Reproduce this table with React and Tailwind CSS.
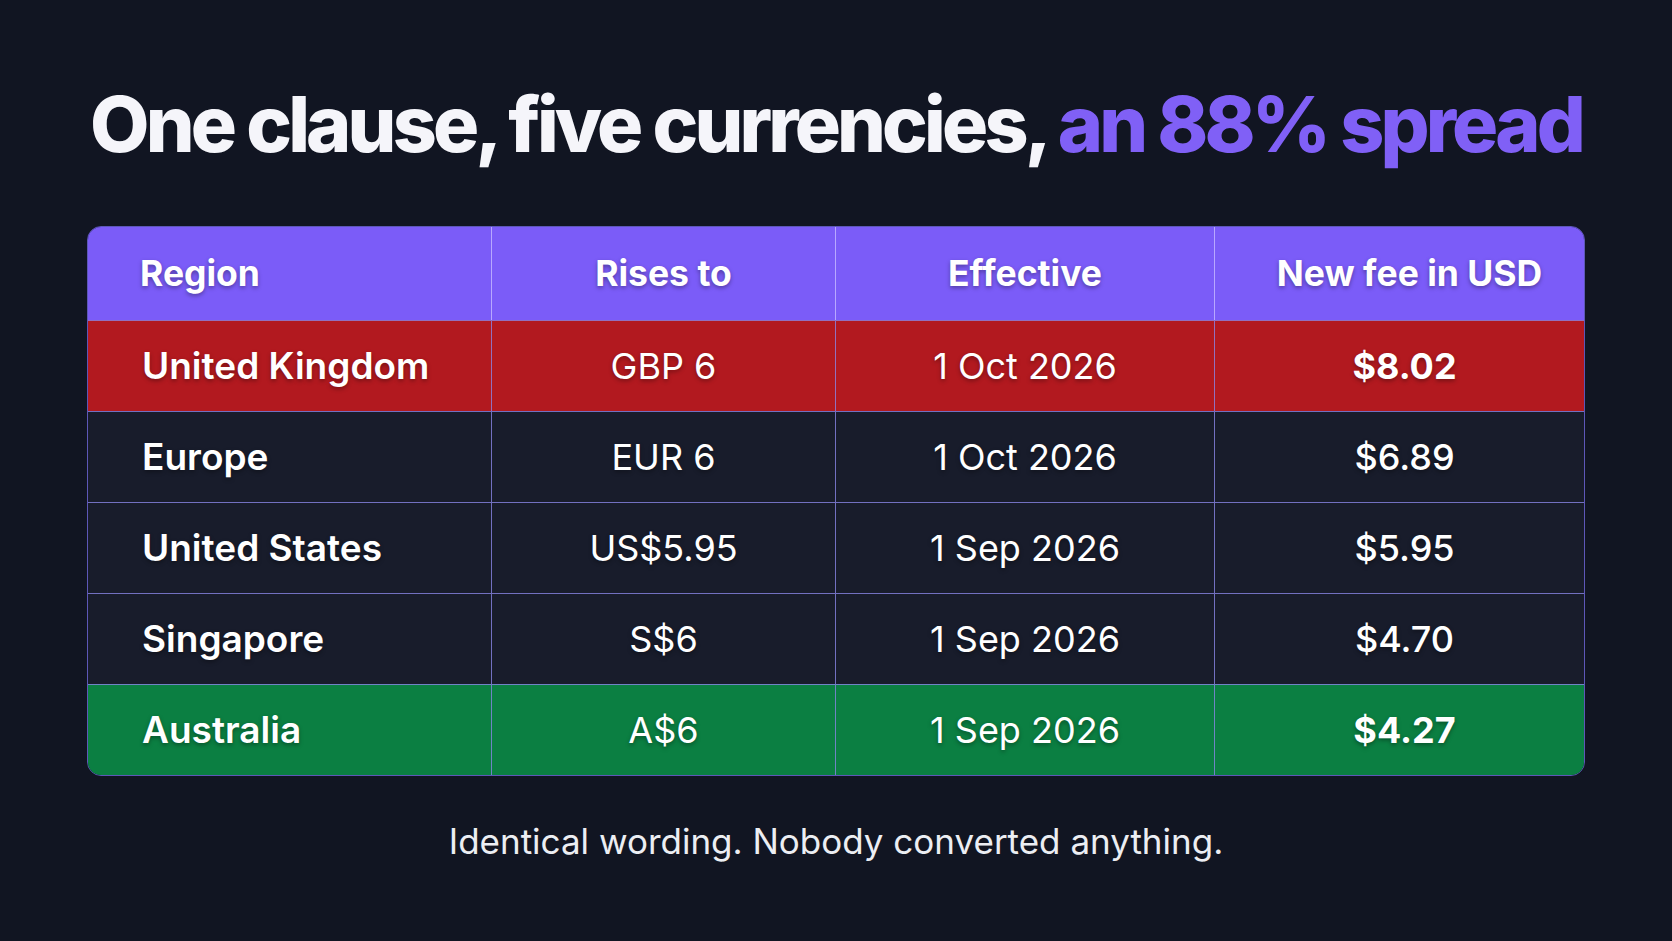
import React from 'react';

const rows = [
  { region: 'United Kingdom', rises: 'GBP 6', eff: '1 Oct 2026', usd: '$8.02', tone: 'red' },
  { region: 'Europe', rises: 'EUR 6', eff: '1 Oct 2026', usd: '$6.89', tone: 'dark' },
  { region: 'United States', rises: 'US$5.95', eff: '1 Sep 2026', usd: '$5.95', tone: 'dark' },
  { region: 'Singapore', rises: 'S$6', eff: '1 Sep 2026', usd: '$4.70', tone: 'dark' },
  { region: 'Australia', rises: 'A$6', eff: '1 Sep 2026', usd: '$4.27', tone: 'green' },
];

const toneBg = {
  red: 'bg-[#b2191f]',
  dark: 'bg-[#181c2b]',
  green: 'bg-[#0b7f42]',
};

const shadow = '[text-shadow:0_2px_4px_rgba(0,0,0,0.35)]';

function Row({ r }) {
  const strongUsd = r.tone !== 'dark';
  return (
    <div className={`flex h-[91px] border-t border-[#8a86e6]/80 ${toneBg[r.tone]}`}>
      <div className={`w-[403px] flex items-center pl-[54px] text-[37px] font-semibold text-white ${shadow}`}>
        {r.region}
      </div>
      <div className={`w-[344px] flex items-center justify-center border-l border-[#8a86e6]/80 text-[36px] font-normal text-white ${shadow}`}>
        {r.rises}
      </div>
      <div className={`w-[379px] flex items-center justify-center border-l border-[#8a86e6]/80 text-[36px] font-normal text-white ${shadow}`}>
        {r.eff}
      </div>
      <div className={`flex-1 flex items-center justify-center pl-[10px] border-l border-[#8a86e6]/80 text-[36px] text-white ${strongUsd ? 'font-bold' : 'font-medium'} ${shadow}`}>
        {r.usd}
      </div>
    </div>
  );
}

export default function App() {
  return (
    <div
      className="w-full h-[941px] bg-[#111522] flex flex-col items-center overflow-hidden"
      style={{ fontFamily: 'Inter, "Noto Sans", sans-serif' }}
    >
      {/* Title */}
      <h1 className="mt-[86px] text-[77px] leading-none font-extrabold tracking-[-0.05em] text-[#f5f5fa] whitespace-nowrap">
        One clause, five currencies, <span className="text-[#8060f6]">an 88% spread</span>
      </h1>

      {/* Table */}
      <div className="mt-[63px] w-[1498px] rounded-[14px] border border-[#5d57b8] overflow-hidden">
        <div className={`flex h-[93px] bg-[#7b5cf8] text-[35.5px] font-bold text-white ${shadow}`}>
          <div className="w-[403px] flex items-center pl-[52px]">Region</div>
          <div className="w-[344px] flex items-center justify-center border-l border-[#b8a8ff]">Rises to</div>
          <div className="w-[379px] flex items-center justify-center border-l border-[#b8a8ff]">Effective</div>
          <div className="flex-1 flex items-center justify-center pl-[20px] border-l border-[#b8a8ff]">New fee in USD</div>
        </div>
        {rows.map((r) => (
          <Row key={r.region} r={r} />
        ))}
      </div>

      {/* Footer note */}
      <p className="mt-[48px] text-[35px] leading-none font-normal text-[#eceef3]">
        Identical wording. Nobody converted anything.
      </p>
    </div>
  );
}
